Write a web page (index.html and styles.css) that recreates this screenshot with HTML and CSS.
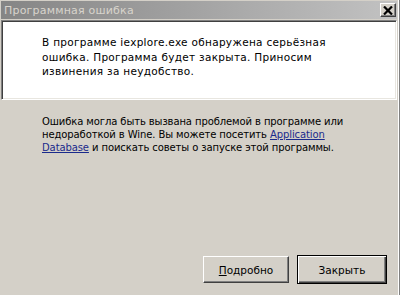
FILE: index.html
```html
<!DOCTYPE html>
<html lang="ru">
<head>
    <meta charset="UTF-8">
    <meta name="viewport" content="width=device-width, initial-scale=1.0">
    <title>Программная ошибка</title>
    <link rel="stylesheet" href="styles.css">
</head>
<body>
    <div class="window">
        <div class="titlebar">
            <span class="title">Программная ошибка</span>
            <span class="close">
                <svg width="10" height="9" viewBox="0 0 10 9">
                    <path d="M1 0.5 L9 8.5 M9 0.5 L1 8.5" stroke="#000" stroke-width="2.2"/>
                </svg>
            </span>
        </div>

        <div class="message">
            <p>В программе iexplore.exe обнаружена серьёзная ошибка. Программа будет закрыта. Приносим извинения за неудобство.</p>
        </div>

        <div class="info">
            <p>Ошибка могла быть вызвана проблемой в программе или недоработкой в Wine. Вы можете посетить <a href="#">Application Database</a> и поискать советы о запуске этой программы.</p>
        </div>

        <div class="buttons">
            <button class="btn"><u>П</u>одробно</button>
            <button class="btn default">Закрыть</button>
        </div>
    </div>
</body>
</html>
```

FILE: styles.css
```css
body {
    margin: 0;
    background: #d4d0c8;
    font-family: 'DejaVu Sans', sans-serif;
    color: #000;
}

.window {
    width: 400px;
    height: 295px;
    box-sizing: border-box;
    display: flex;
    flex-direction: column;
    border-right: 1px solid #808080;
    box-shadow: inset -1px 0 0 #fff;
    padding: 1px 2px 0 1px;
}

.titlebar {
    height: 18px;
    display: flex;
    align-items: center;
    justify-content: space-between;
    padding: 0 1px 0 3px;
    background: linear-gradient(to right, #858585, #c2c2c2);
}

.title {
    font-size: 11px;
    letter-spacing: 0.2px;
    color: #d8d4cc;
}

.close {
    width: 16px;
    height: 14px;
    box-sizing: border-box;
    display: flex;
    align-items: center;
    justify-content: center;
    background: #d4d0c8;
    border-top: 1px solid #fff;
    border-left: 1px solid #fff;
    border-right: 1px solid #404040;
    border-bottom: 1px solid #404040;
    box-shadow: inset -1px -1px 0 #808080;
}

.message {
    margin-top: 1px;
    height: 80px;
    box-sizing: border-box;
    background: #fff;
    border-top: 1px solid #808080;
    border-left: 1px solid #808080;
    border-right: 1px solid #fff;
    border-bottom: 1px solid #fff;
    box-shadow: inset 1px 1px 0 #404040, inset -1px -1px 0 #e8e6e0;
    padding: 14px 0 0 40px;
}

.message p {
    margin: 0;
    width: 310px;
    font-size: 10.5px;
    letter-spacing: 0.3px;
    line-height: 14.5px;
}

.info {
    padding: 15px 0 0 41px;
}

.info p {
    margin: 0;
    width: 318px;
    font-size: 10px;
    letter-spacing: -0.1px;
    line-height: 13px;
}

.info a {
    color: #1a2a8c;
}

.buttons {
    margin-top: auto;
    display: flex;
    justify-content: flex-end;
    gap: 8px;
    padding: 0 10px 11px 0;
}

.btn {
    width: 86px;
    height: 27px;
    font-family: 'DejaVu Sans', sans-serif;
    font-size: 10.5px;
    color: #000;
    background: #d4d0c8;
    border-top: 1px solid #fff;
    border-left: 1px solid #fff;
    border-right: 1px solid #404040;
    border-bottom: 1px solid #404040;
    box-shadow: inset -1px -1px 0 #808080;
    padding: 0;
}

.btn.default {
    width: 90px;
    height: 29px;
    border: 1px solid #000;
    box-shadow: inset 1px 1px 0 #fff, inset -1px -1px 0 #404040, inset -2px -2px 0 #808080;
    margin-top: -1px;
}
```
